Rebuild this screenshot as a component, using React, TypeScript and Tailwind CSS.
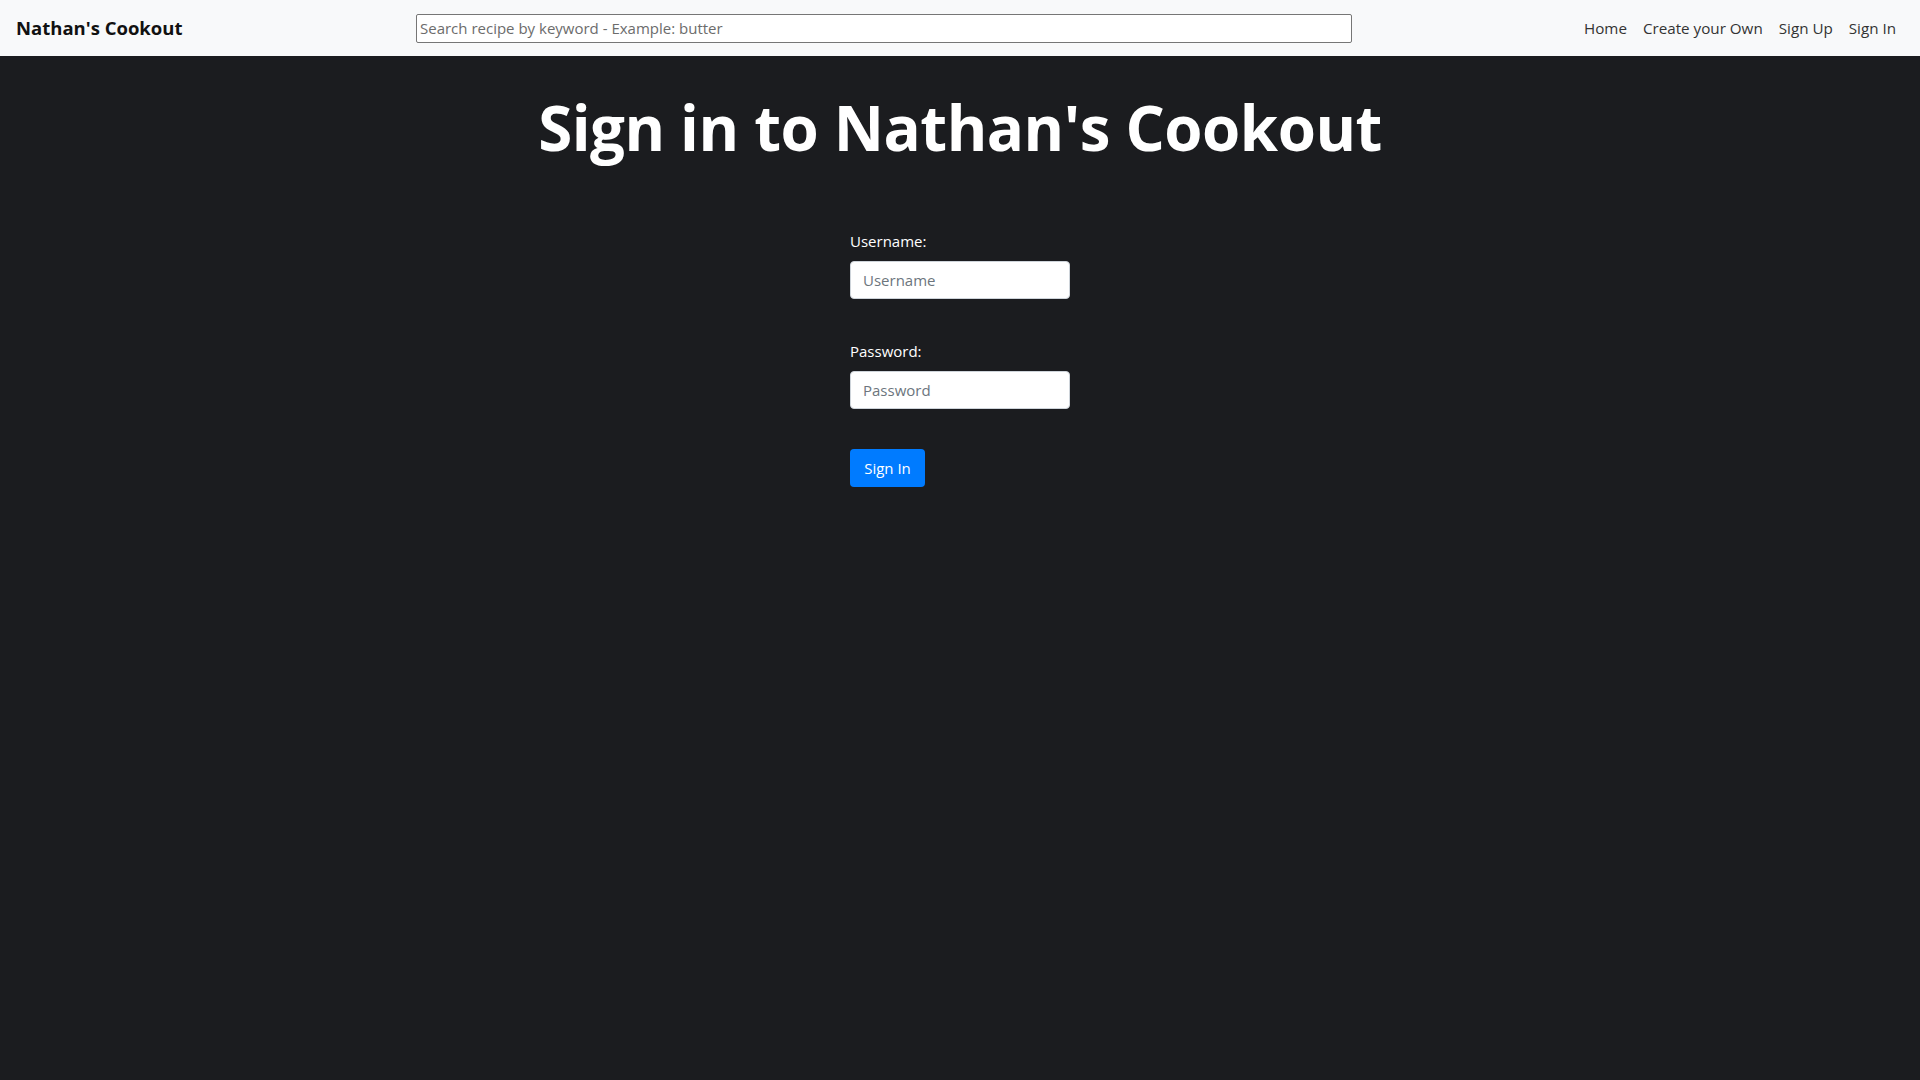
import { useState } from "react";

export default function App() {
  const [search, setSearch] = useState("");
  const [username, setUsername] = useState("");
  const [password, setPassword] = useState("");

  return (
    <div className="min-h-screen bg-[#1b1c1f] font-['Open_Sans',sans-serif]">
      {/* navbar */}
      <nav className="h-[56px] bg-[#f8f9fa] flex items-center px-4">
        <a href="#" className="text-[18.5px] font-bold text-[#111] w-[400px] shrink-0">
          Nathan's Cookout
        </a>
        <input
          type="text"
          value={search}
          onChange={(e) => setSearch(e.target.value)}
          placeholder="Search recipe by keyword - Example: butter"
          className="w-[936px] h-[29px] border border-[#767676] rounded-[2px] bg-white px-[3px] text-[15px] text-[#222] placeholder-[#6c6c6c] outline-none"
        />
        <ul className="ml-auto flex items-center text-[15.2px] text-[#333]">
          <li><a href="#" className="px-2">Home</a></li>
          <li><a href="#" className="px-2">Create your Own</a></li>
          <li><a href="#" className="px-2">Sign Up</a></li>
          <li><a href="#" className="px-2">Sign In</a></li>
        </ul>
      </nav>

      <main className="flex flex-col items-center">
        <h1 className="mt-[34px] text-[61.8px] leading-[1.2] font-bold text-white tracking-[-0.5px]">
          Sign in to Nathan's Cookout
        </h1>

        <form className="w-[220px] mt-[65px] text-white" onSubmit={(e) => e.preventDefault()}>
          <div className="mb-[40px]">
            <label className="block text-[15px] leading-[24px] mb-[8px]">Username:</label>
            <input
              type="text"
              value={username}
              onChange={(e) => setUsername(e.target.value)}
              placeholder="Username"
              className="w-full h-[38px] rounded-[4px] border border-[#ced4da] bg-white px-3 text-[15px] text-[#495057] placeholder-[#6c757d] outline-none"
            />
          </div>
          <div className="mb-[40px]">
            <label className="block text-[15px] leading-[24px] mb-[8px]">Password:</label>
            <input
              type="password"
              value={password}
              onChange={(e) => setPassword(e.target.value)}
              placeholder="Password"
              className="w-full h-[38px] rounded-[4px] border border-[#ced4da] bg-white px-3 text-[15px] text-[#495057] placeholder-[#6c757d] outline-none"
            />
          </div>
          <button
            type="submit"
            className="h-[38px] w-[75px] rounded-[4px] bg-[#007bff] text-white text-[15px]"
          >
            Sign In
          </button>
        </form>
      </main>
    </div>
  );
}
